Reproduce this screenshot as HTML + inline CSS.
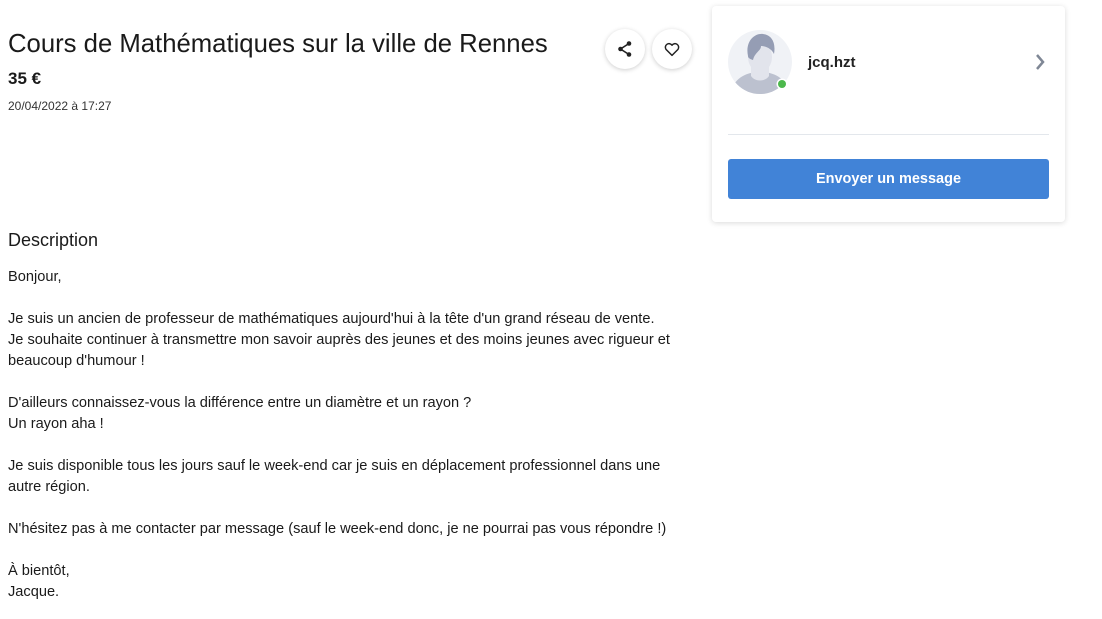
<!DOCTYPE html>
<html><head><meta charset="utf-8"><style>
body{margin:0;width:1102px;height:619px;background:#fff;font-family:"Liberation Sans",sans-serif;color:#1a1a1a;position:relative;overflow:hidden}
.a{position:absolute;white-space:nowrap}
.desc{position:absolute;left:8px;top:267px;font-size:14.6px;line-height:21px;color:#1a1a1a}
.rb{position:absolute;width:40px;height:40px;border-radius:50%;background:#fff;box-shadow:0 1px 5px rgba(0,0,0,.2);display:flex;align-items:center;justify-content:center}
</style></head><body>
<div class="a" style="left:8px;top:30px;font-size:25.7px">Cours de Mathématiques sur la ville de Rennes</div>
<div class="a" style="left:8px;top:69px;font-size:17px;font-weight:bold">35 €</div>
<div class="a" style="left:8px;top:99px;font-size:12px;color:#333">20/04/2022 à 17:27</div>
<div class="rb" style="left:605px;top:29px"><svg width="18" height="18" viewBox="0 0 18 18"><g fill="#222"><circle cx="13" cy="3.5" r="2.3"/><circle cx="4.5" cy="9" r="2.3"/><circle cx="13" cy="14.5" r="2.3"/></g><path d="M13 3.5L4.5 9L13 14.5" stroke="#222" stroke-width="1.6" fill="none"/></svg></div>
<div class="rb" style="left:652px;top:29px"><svg width="18" height="18" viewBox="0 0 24 24"><path d="M12 20.5l-8-8a4.8 4.8 0 0 1 8-5.5a4.8 4.8 0 0 1 8 5.5z" fill="none" stroke="#222" stroke-width="2" stroke-linejoin="round"/></svg></div>
<div class="a" style="left:8px;top:230px;font-size:18px">Description</div>
<div class="desc">Bonjour,<br><br>Je suis un ancien de professeur de mathématiques aujourd'hui à la tête d'un grand réseau de vente.<br>Je souhaite continuer à transmettre mon savoir auprès des jeunes et des moins jeunes avec rigueur et<br>beaucoup d'humour !<br><br>D'ailleurs connaissez-vous la différence entre un diamètre et un rayon ?<br>Un rayon aha !<br><br>Je suis disponible tous les jours sauf le week-end car je suis en déplacement professionnel dans une<br>autre région.<br><br>N'hésitez pas à me contacter par message (sauf le week-end donc, je ne pourrai pas vous répondre !)<br><br>À bientôt,<br>Jacque.</div>
<div style="position:absolute;left:712px;top:6px;width:353px;height:216px;background:#fff;border-radius:4px;box-shadow:0 1px 6px rgba(0,0,0,.15)"></div>
<svg style="position:absolute;left:728px;top:30px" width="64" height="64" viewBox="0 0 64 64"><defs><clipPath id="c"><circle cx="32" cy="32" r="32"/></clipPath></defs><circle cx="32" cy="32" r="32" fill="#f0f2f6"/><g clip-path="url(#c)"><path d="M2 66c2-16 14-24 30-24s28 8 30 24z" fill="#bcc1cf"/><path d="M23 34v12c4 6 14 6 18 0V34z" fill="#e2e4ec"/><ellipse cx="32" cy="27" rx="12" ry="15" fill="#e2e4ec"/><path d="M20 26c-3-14 6-23 15-22s13 9 11 20c-3-6-9-8-13-8c0 5-6 6-8 14c-3-1-5-2-5-4z" fill="#959db4"/></g><circle cx="54" cy="54" r="5.5" fill="#fff"/><circle cx="54" cy="54" r="4" fill="#4cb84c"/></svg>
<div class="a" style="left:808px;top:54px;font-size:15px;font-weight:bold;color:#222">jcq.hzt</div>
<svg style="position:absolute;left:1034px;top:53px" width="12" height="18" viewBox="0 0 12 18"><path d="M3 2l6 7l-6 7" stroke="#7f8795" stroke-width="2.5" fill="none"/></svg>
<div style="position:absolute;left:728px;top:134px;width:321px;height:1px;background:#e3e7ec"></div>
<div style="position:absolute;left:728px;top:159px;width:321px;height:40px;background:#4183d7;border-radius:3px;color:#fff;font-size:14.5px;font-weight:bold;display:flex;align-items:center;justify-content:center">Envoyer un message</div>
</body></html>
